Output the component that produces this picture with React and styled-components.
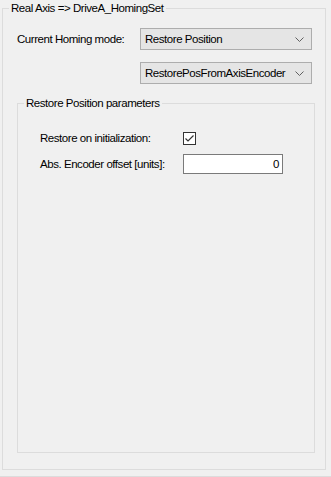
import React from "react";
import styled, { createGlobalStyle } from "styled-components";

const GlobalStyle = createGlobalStyle`
  html, body {
    margin: 0;
    padding: 0;
    background: #f0f0f0;
  }
  body {
    font-family: "Liberation Sans", Arial, sans-serif;
    font-size: 11.5px;
    letter-spacing: -0.45px;
    color: #000;
  }
`;

const Page = styled.div`
  width: 331px;
  height: 477px;
  box-sizing: border-box;
  padding-top: 1px;
  display: flex;
  flex-direction: column;
  overflow: hidden;
`;

const GroupBox = styled.fieldset`
  box-sizing: border-box;
  margin: ${(p) => p.$top || 0}px 0 0 ${(p) => p.$left}px;
  width: ${(p) => p.$width}px;
  height: ${(p) => p.$height}px;
  border: 1px solid #dcdcdc;
  padding: 0;
  min-width: 0;
`;

const Legend = styled.legend`
  margin-left: 6px;
  padding: 0 2px;
  line-height: 15px;
  font-size: 11.5px;
`;

const OuterBody = styled.div`
  padding: 12px 0 0 14px;
`;

const FormGrid = styled.div`
  display: grid;
  grid-template-columns: ${(p) => p.$labelWidth}px auto;
  grid-auto-rows: ${(p) => p.$rowHeight}px;
  row-gap: ${(p) => p.$gap}px;
  align-items: center;
  justify-content: start;
`;

const Label = styled.span`
  white-space: nowrap;
  line-height: 15px;
`;

const Combo = styled.div`
  grid-column: 2;
  box-sizing: border-box;
  width: 172px;
  height: 22px;
  border: 1px solid #adadad;
  background: #e5e5e5;
  display: flex;
  align-items: center;
  justify-content: space-between;
  padding: 0 4px 0 4px;
  white-space: nowrap;
`;

const Chevron = styled.svg`
  width: 9px;
  height: 5px;
  margin-right: 3px;
  flex: none;
`;

const InnerBody = styled.div`
  padding: 17px 0 0 22px;
`;

const CheckBox = styled.span`
  box-sizing: border-box;
  width: 13px;
  height: 13px;
  border: 1px solid #333;
  background: #fff;
  display: flex;
  align-items: center;
  justify-content: center;
`;

const TextBox = styled.div`
  box-sizing: border-box;
  width: 100px;
  height: 20px;
  border: 1px solid #7a7a7a;
  background: #fff;
  display: flex;
  align-items: center;
  justify-content: flex-end;
  padding-right: 3px;
`;

const Footer = styled.div`
  margin-top: 6px;
  border-top: 1px solid #dcdcdc;
  flex: 1;
`;

function ComboBox({ value }) {
  return (
    <Combo>
      <span>{value}</span>
      <Chevron viewBox="0 0 9 5">
        <polyline points="0.5,0.5 4.5,4.5 8.5,0.5" fill="none" stroke="#606060" strokeWidth="1" />
      </Chevron>
    </Combo>
  );
}

export default function App() {
  return (
    <>
      <GlobalStyle />
      <Page>
        <GroupBox $left={2} $width={324} $height={469}>
          <Legend>Real Axis =&gt; DriveA_HomingSet</Legend>
          <OuterBody>
            <FormGrid $labelWidth={123} $rowHeight={22} $gap={12}>
              <Label>Current Homing mode:</Label>
              <ComboBox value="Restore Position" />
              <ComboBox value="RestorePosFromAxisEncoder" />
            </FormGrid>
            <GroupBox $top={12} $left={0} $width={298} $height={357}>
              <Legend>Restore Position parameters</Legend>
              <InnerBody>
                <FormGrid $labelWidth={143} $rowHeight={20} $gap={6}>
                  <Label>Restore on initialization:</Label>
                  <CheckBox>
                    <svg width="11" height="11" viewBox="0 0 11 11">
                      <polyline points="1.5,5.5 4,8 9.5,2.5" fill="none" stroke="#333" strokeWidth="1.2" />
                    </svg>
                  </CheckBox>
                  <Label>Abs. Encoder offset [units]:</Label>
                  <TextBox>0</TextBox>
                </FormGrid>
              </InnerBody>
            </GroupBox>
          </OuterBody>
        </GroupBox>
        <Footer />
      </Page>
    </>
  );
}
